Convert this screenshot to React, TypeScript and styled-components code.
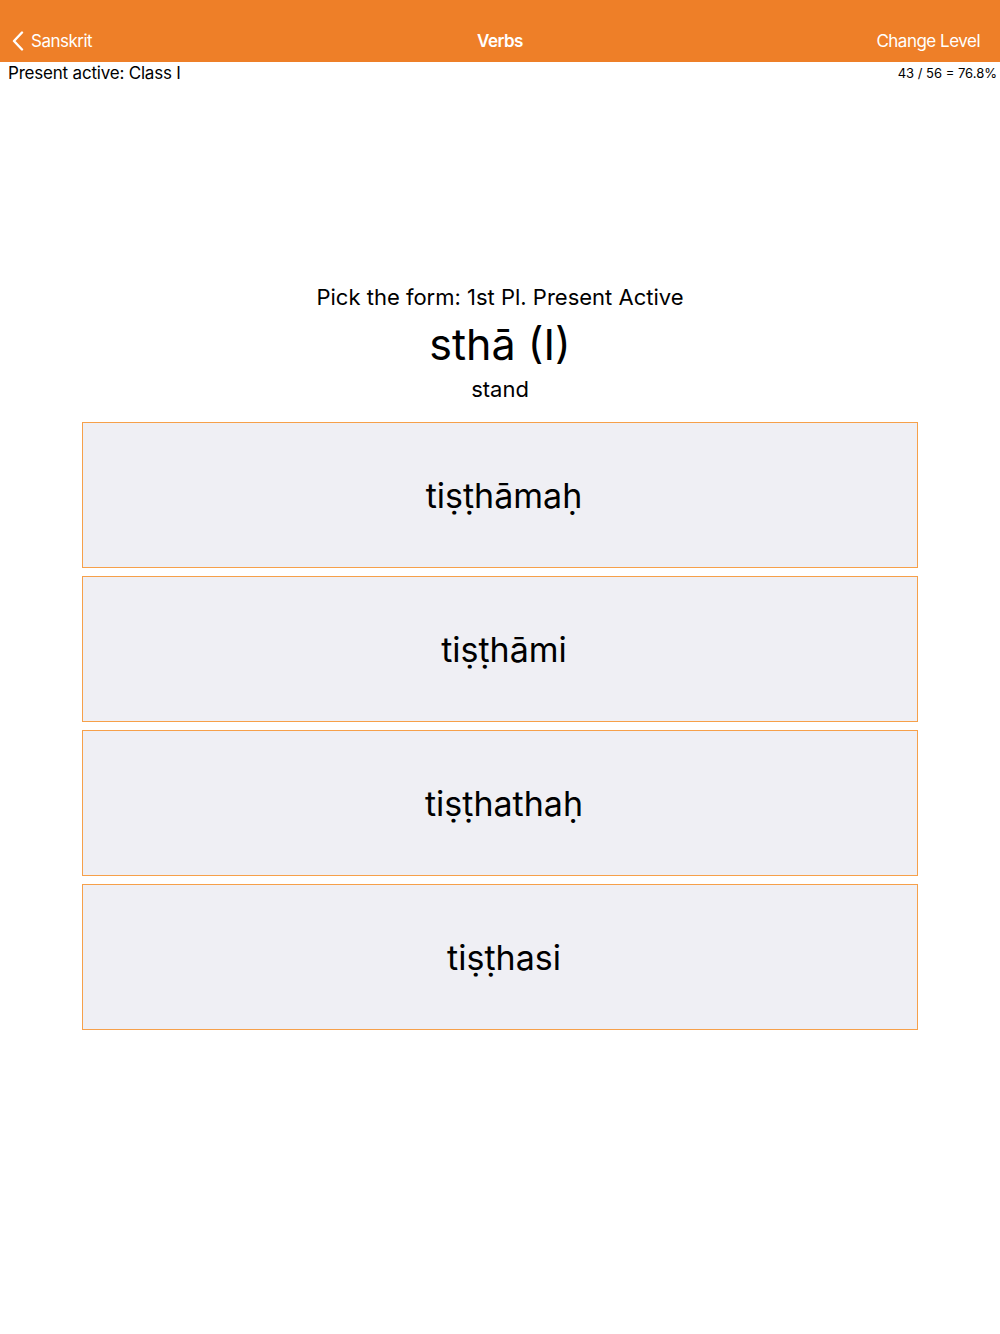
import React from 'react'
import styled, { createGlobalStyle } from 'styled-components'

const GlobalStyle = createGlobalStyle`
    body {
        margin: 0;
        background: #ffffff;
        font-family: Inter, "Noto Sans", sans-serif;
        color: #000000;
    }
`

const NavBar = styled.header`
    position: relative;
    display: flex;
    align-items: center;
    justify-content: space-between;
    height: 62px;
    padding: 20px 20px 0 12px;
    box-sizing: border-box;
    background: #ee7f28;
    color: #ffffff;
    font-size: 17px;
    letter-spacing: -0.5px;
`

const BackButton = styled.div`
    display: flex;
    align-items: center;
    gap: 7px;
`

const NavTitle = styled.div`
    position: absolute;
    left: 0;
    right: 0;
    top: 20px;
    bottom: 0;
    display: flex;
    align-items: center;
    justify-content: center;
    font-weight: 600;
    pointer-events: none;
`

const InfoRow = styled.div`
    display: flex;
    align-items: center;
    justify-content: space-between;
    height: 22px;
    padding: 0 3px 0 8px;
`

const Level = styled.span`
    font-size: 17px;
    letter-spacing: -0.2px;
`

const Score = styled.span`
    font-size: 13px;
`

const Quiz = styled.main`
    display: flex;
    flex-direction: column;
    align-items: center;
    padding-top: 200px;
`

const Prompt = styled.div`
    font-size: 22px;
    line-height: 26px;
`

const Word = styled.div`
    margin-top: 8px;
    font-size: 43px;
    line-height: 52px;
`

const Meaning = styled.div`
    margin-top: 6px;
    font-size: 22px;
    line-height: 26px;
`

const Choices = styled.div`
    display: flex;
    flex-direction: column;
    gap: 8px;
    width: 836px;
    margin-top: 20px;
`

const Choice = styled.button`
    display: flex;
    align-items: center;
    justify-content: center;
    height: 146px;
    border: 1px solid #f6a04a;
    background: #efeff4;
    font-family: inherit;
    font-size: 34px;
    color: #000000;
    padding: 0 0 0 8px;
`

const choices = ['tiṣṭhāmaḥ', 'tiṣṭhāmi', 'tiṣṭhathaḥ', 'tiṣṭhasi']

const App: React.FC = () => (
    <>
        <GlobalStyle />
        <NavBar>
            <BackButton>
                <svg width="12" height="20" viewBox="0 0 12 20">
                    <path d="M10 1.5 L2 10 L10 18.5" fill="none" stroke="#ffffff" strokeWidth="2.4" strokeLinecap="round" strokeLinejoin="round" />
                </svg>
                <span>Sanskrit</span>
            </BackButton>
            <NavTitle>Verbs</NavTitle>
            <span>Change Level</span>
        </NavBar>
        <InfoRow>
            <Level>Present active: Class I</Level>
            <Score>43 / 56 = 76.8%</Score>
        </InfoRow>
        <Quiz>
            <Prompt>Pick the form: 1st Pl. Present Active</Prompt>
            <Word>sthā (I)</Word>
            <Meaning>stand</Meaning>
            <Choices>
                {choices.map((c) => (
                    <Choice key={c}>{c}</Choice>
                ))}
            </Choices>
        </Quiz>
    </>
)

export default App
